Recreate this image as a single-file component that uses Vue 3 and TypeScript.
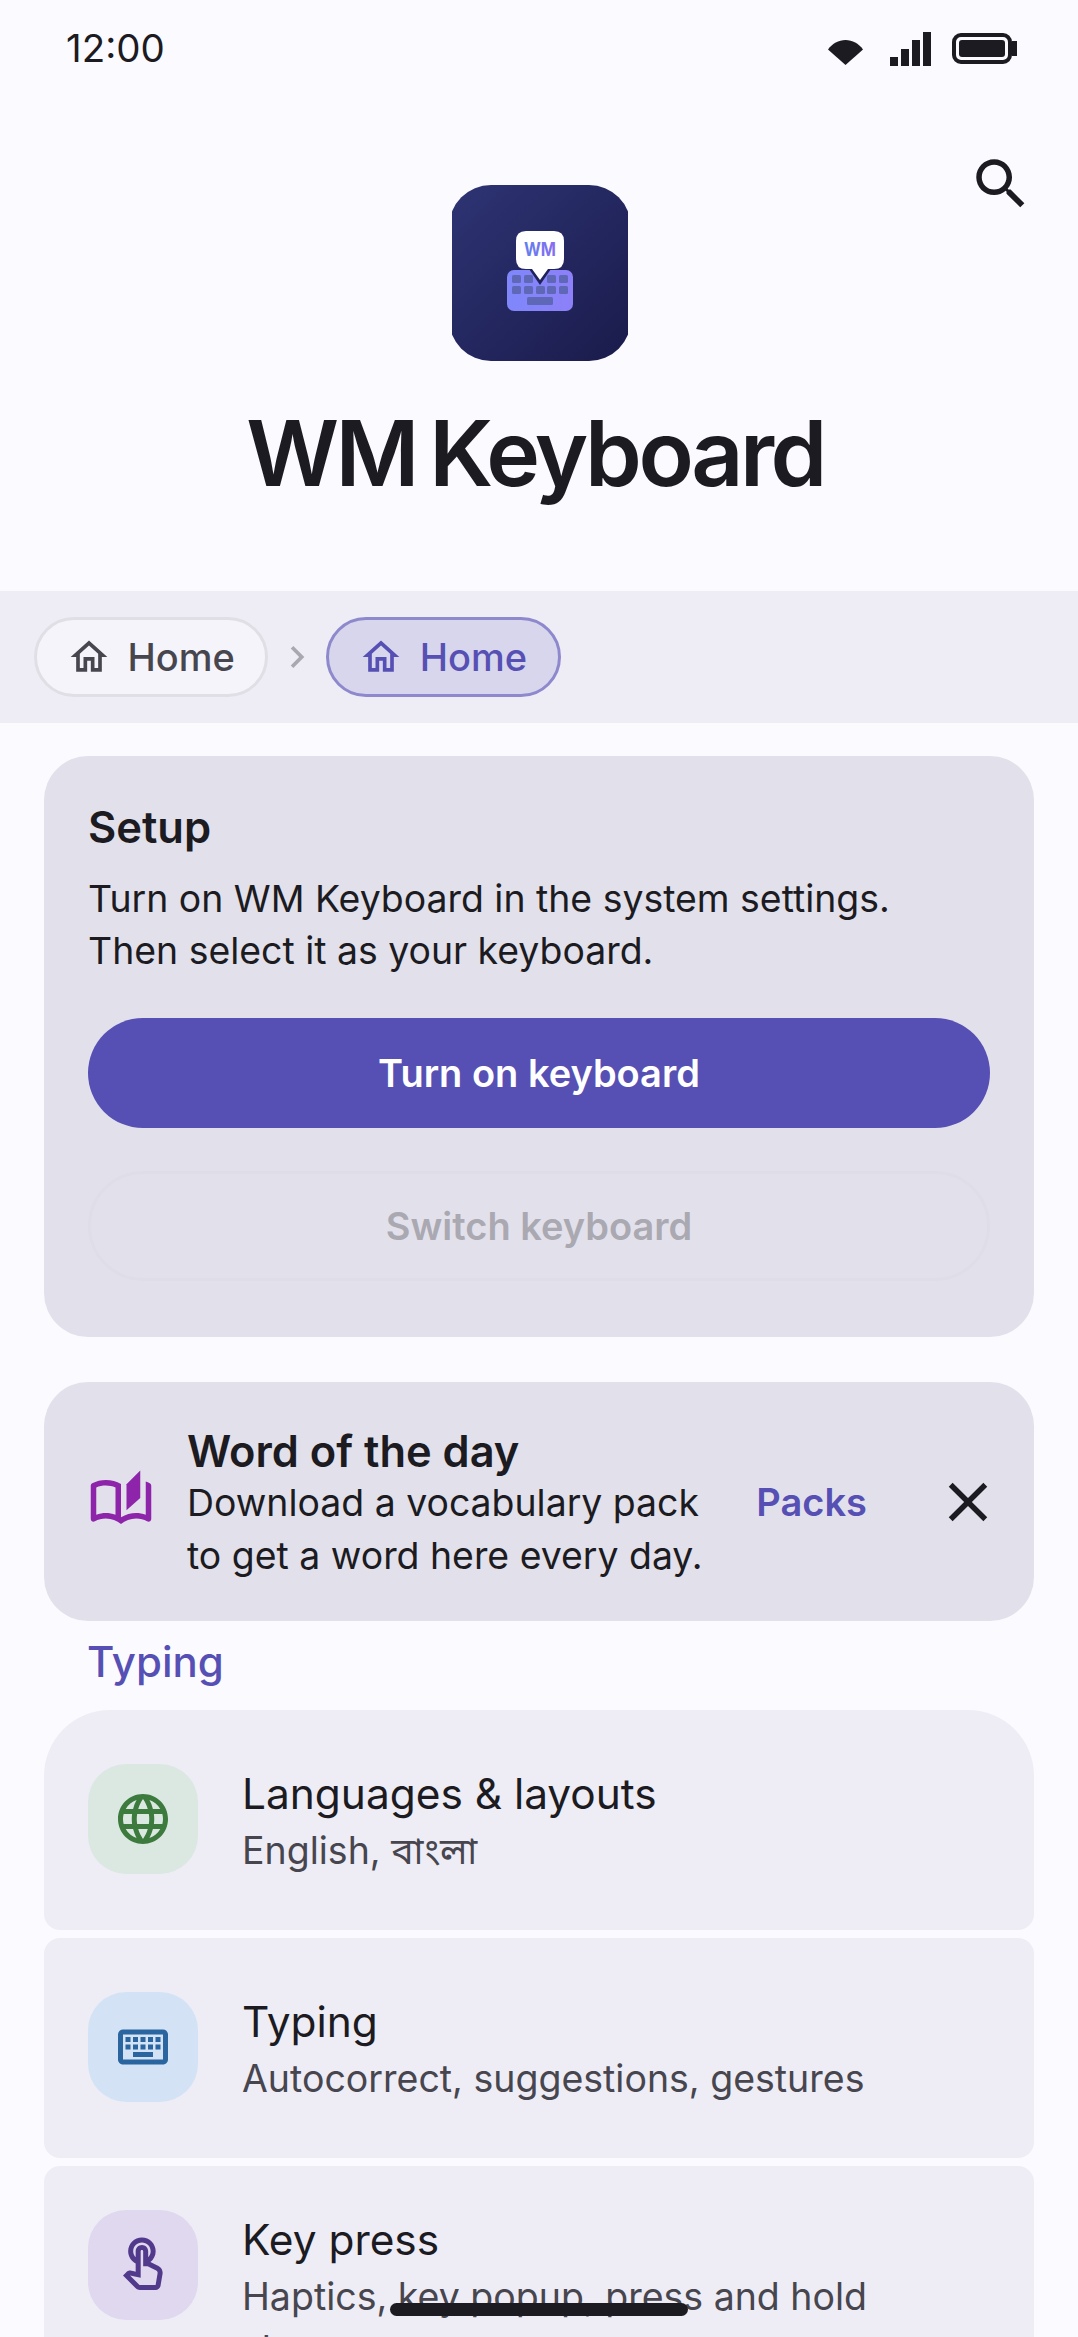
<script setup lang="ts">
interface SettingRow {
  title: string;
  sub: string;
  tone: string;
  path: string;
}

const homePath = 'M12 5.69l5 4.5V18h-2v-6H9v6H7v-7.81l5-4.5M12 3L2 12h3v8h6v-6h2v6h6v-8h3L12 3z';

const rows: SettingRow[] = [
  {
    title: 'Languages & layouts',
    sub: 'English, বাংলা',
    tone: 'green',
    path: 'M11.99 2C6.47 2 2 6.48 2 12s4.47 10 9.99 10C17.52 22 22 17.52 22 12S17.52 2 11.99 2zm6.93 6h-2.95c-.32-1.25-.78-2.45-1.38-3.56 1.84.63 3.37 1.91 4.33 3.56zM12 4.04c.83 1.2 1.48 2.53 1.91 3.96h-3.82c.43-1.43 1.08-2.76 1.91-3.96zM4.26 14C4.1 13.36 4 12.69 4 12s.1-1.36.26-2h3.38c-.08.66-.14 1.32-.14 2 0 .68.06 1.34.14 2H4.26zm.82 2h2.95c.32 1.25.78 2.45 1.38 3.56-1.84-.63-3.37-1.9-4.33-3.56zm2.95-8H5.08c.96-1.66 2.49-2.93 4.33-3.56C8.81 5.55 8.35 6.75 8.03 8zM12 19.96c-.83-1.2-1.48-2.53-1.91-3.96h3.82c-.43 1.43-1.08 2.76-1.91 3.96zM14.34 14H9.66c-.09-.66-.16-1.32-.16-2 0-.68.07-1.35.16-2h4.68c.09.65.16 1.32.16 2 0 .68-.07 1.34-.16 2zm.25 5.56c.6-1.11 1.06-2.31 1.38-3.56h2.95c-.96 1.65-2.49 2.93-4.33 3.56zM16.36 14c.08-.66.14-1.32.14-2 0-.68-.06-1.34-.14-2h3.38c.16.64.26 1.31.26 2s-.1 1.36-.26 2h-3.38z',
  },
  {
    title: 'Typing',
    sub: 'Autocorrect, suggestions, gestures',
    tone: 'blue',
    path: 'M20 7v10H4V7h16m0-2H4c-1.1 0-1.99.9-1.99 2L2 17c0 1.1.9 2 2 2h16c1.1 0 2-.9 2-2V7c0-1.1-.9-2-2-2zm-9 3h2v2h-2zm0 3h2v2h-2zM8 8h2v2H8zm0 3h2v2H8zm-3 0h2v2H5zm0-3h2v2H5zm3 6h8v2H8zm6-3h2v2h-2zm0-3h2v2h-2zm3 3h2v2h-2zm0-3h2v2h-2z',
  },
  {
    title: 'Key press',
    sub: 'Haptics, key popup, press and hold shortcuts',
    tone: 'purple',
    path: 'M18.19 12.44l-3.24-1.62c1.29-1 2.12-2.56 2.12-4.32C17.07 3.47 14.6 1 11.57 1S6.07 3.47 6.07 6.5c0 2.13 1.22 3.98 3 4.89v3.26c-2.15-.46-2.02-.44-2.26-.44-.53 0-1.03.21-1.41.59L4 16.22l5.09 5.09C9.52 21.75 10.12 22 10.74 22h6.3c.98 0 1.81-.7 1.97-1.67l.8-4.71c.22-1.3-.43-2.58-1.62-3.18zm-.35 2.85l-.8 4.71h-6.3c-.09 0-.17-.04-.24-.1l-3.68-3.68 4.25.89V6.5c0-.28.22-.5.5-.5s.5.22.5.5v6h1.76l3.46 1.73c.4.2.62.63.55 1.06zM8.07 6.5c0-1.93 1.57-3.5 3.5-3.5s3.5 1.57 3.5 3.5c0 .95-.38 1.81-1 2.44V6.5c0-1.38-1.12-2.5-2.5-2.5s-2.5 1.12-2.5 2.5v2.44c-.62-.63-1-1.49-1-2.44z',
  },
];
</script>

<template>
  <div class="screen">
    <div class="status-bar">
      <span class="clock">12:00</span>
      <div class="status-icons">
        <svg class="wifi" width="35" height="25" viewBox="0 0 35 25">
          <path d="M0 9.5C4.5 3.5 10.5 0 17.5 0S30.500 3.500 35 9.500L17.500 25z" />
        </svg>
        <svg class="signal" width="41" height="34" viewBox="0 0 41 34">
          <rect x="0" y="25" width="8" height="9" />
          <rect x="11" y="17" width="8" height="17" />
          <rect x="22" y="8" width="8" height="26" />
          <rect x="33" y="0" width="8" height="34" />
        </svg>
        <svg class="battery" width="65" height="31" viewBox="0 0 65 31">
          <rect x="2" y="2" width="56" height="27" rx="7" fill="none" stroke="#1c1b22" stroke-width="4" />
          <rect x="7" y="7" width="46" height="17" rx="3" />
          <rect x="60" y="8" width="5" height="15" />
        </svg>
      </div>
    </div>

    <header class="hero">
      <div class="hero-title">
        <svg class="logo" width="176" height="176" viewBox="0 0 176 176">
          <defs>
            <linearGradient id="logoBg" x1="0" y1="0" x2="1" y2="1">
              <stop offset="0" stop-color="#2e3474" />
              <stop offset="1" stop-color="#1a1b4b" />
            </linearGradient>
            <linearGradient id="keyBg" x1="0" y1="0" x2="1" y2="0">
              <stop offset="0" stop-color="#7f87fb" />
              <stop offset="1" stop-color="#8d80f8" />
            </linearGradient>
            <linearGradient id="wmText" x1="0" y1="0" x2="1" y2="0">
              <stop offset="0" stop-color="#5f80ee" />
              <stop offset="1" stop-color="#8a6cf0" />
            </linearGradient>
          </defs>
          <rect x="-3" width="182" height="176" rx="42" fill="url(#logoBg)" />
          <rect x="55" y="85" width="66" height="41" rx="7" fill="url(#keyBg)" />
          <g fill="#5f68b6">
            <rect x="60" y="90" width="9" height="8" rx="1.500" />
            <rect x="72" y="90" width="9" height="8" rx="1.500" />
            <rect x="95" y="90" width="9" height="8" rx="1.500" />
            <rect x="107" y="90" width="9" height="8" rx="1.500" />
            <rect x="60" y="101" width="9" height="8" rx="1.500" />
            <rect x="72" y="101" width="9" height="8" rx="1.500" />
            <rect x="84" y="101" width="9" height="8" rx="1.500" />
            <rect x="95" y="101" width="9" height="8" rx="1.500" />
            <rect x="107" y="101" width="9" height="8" rx="1.500" />
            <rect x="75" y="112" width="26" height="8" rx="1.500" />
          </g>
          <path d="M77 84L88 100L99 84z" fill="#20225a" />
          <path d="M74 46H102Q112 46 112 56V74Q112 84 102 84H96L88 95L80 84H74Q64 84 64 74V56Q64 46 74 46z" fill="#fff" />
          <text x="88" y="71" class="logo-text" text-anchor="middle" textLength="32" lengthAdjust="spacingAndGlyphs" fill="url(#wmText)">WM</text>
        </svg>
        <h1 class="app-name">WM Keyboard</h1>
      </div>
      <svg class="search" width="66" height="66" viewBox="0 0 24 24">
        <path d="M15.500 14h-.79l-.28-.27C15.410 12.590 16 11.110 16 9.500 16 5.910 13.090 3 9.500 3S3 5.910 3 9.500 5.910 16 9.500 16c1.610 0 3.090-.59 4.230-1.570l.27.28v.79l5 4.990L20.490 19l-4.990-5zm-6 0C7.010 14 5 11.990 5 9.500S7.010 5 9.500 5 14 7.010 14 9.500 11.990 14 9.500 14z" />
      </svg>
    </header>

    <nav class="crumbs">
      <div class="chip">
        <svg width="44" height="44" viewBox="0 0 24 24"><path :d="homePath" /></svg>
        <span>Home</span>
      </div>
      <svg class="chevron" width="44" height="44" viewBox="0 0 24 24">
        <path d="M10 6L8.590 7.410 13.170 12l-4.580 4.590L10 18l6-6z" />
      </svg>
      <div class="chip chip--current">
        <svg width="44" height="44" viewBox="0 0 24 24"><path :d="homePath" /></svg>
        <span>Home</span>
      </div>
    </nav>

    <section class="card setup">
      <h2 class="setup-title">Setup</h2>
      <p class="setup-text">Turn on WM Keyboard in the system settings.<br />Then select it as your keyboard.</p>
      <button type="button" class="btn btn--primary">Turn on keyboard</button>
      <button type="button" class="btn btn--disabled">Switch keyboard</button>
    </section>

    <section class="card word">
      <svg class="word-icon" width="66" height="66" viewBox="0 0 24 24">
        <path d="M22.470 5.200C22 4.960 21.510 4.760 21 4.590v12.030C19.860 16.210 18.690 16 17.500 16c-1.900 0-3.780.54-5.500 1.580V5.480C10.380 4.550 8.510 4 6.500 4 4.710 4 3.020 4.440 1.530 5.200 1.200 5.360 1 5.710 1 6.080v12.080c0 .76.82 1.230 1.530.84C3.690 18.400 5.040 18 6.500 18c2.070 0 3.980.82 5.500 2 1.520-1.180 3.430-2 5.500-2 1.460 0 2.810.4 3.970 1 .71.39 1.530-.08 1.530-.84V6.080c0-.37-.2-.72-.53-.88zM10 16.620C8.860 16.210 7.690 16 6.500 16c-1.190 0-2.360.21-3.500.62V6.710C4.110 6.240 5.280 6 6.500 6c1.200 0 2.390.25 3.500.72v9.900z" />
        <path d="M19 .5l-5 5V15l5-4.500V.5z" />
      </svg>
      <div class="word-body">
        <div class="word-title">Word of the day</div>
        <div class="word-text">Download a vocabulary pack<br />to get a word here every day.</div>
      </div>
      <span class="word-link">Packs</span>
      <svg class="word-close" width="66" height="66" viewBox="0 0 24 24">
        <path d="M19 6.410L17.590 5 12 10.590 6.410 5 5 6.410 10.590 12 5 17.590 6.410 19 12 13.410 17.590 19 19 17.590 13.410 12z" />
      </svg>
    </section>

    <div class="section-label">Typing</div>

    <div class="group">
      <div v-for="row in rows" :key="row.title" class="row">
        <div class="row-inner">
          <div class="row-icon" :class="`row-icon--${row.tone}`">
            <svg width="60" height="60" viewBox="0 0 24 24"><path :d="row.path" /></svg>
          </div>
          <div class="row-text">
            <div class="row-title">{{ row.title }}</div>
            <div class="row-sub">{{ row.sub }}</div>
          </div>
        </div>
      </div>
    </div>

    <div class="home-bar"></div>
  </div>
</template>

<style>
html,
body {
  margin: 0;
  background: #fbfaff;
  overflow: hidden;
}
</style>

<style scoped>
.screen {
  position: relative;
  width: 1078px;
  height: 2337px;
  overflow: hidden;
  background: #fbfaff;
  color: #1c1b22;
  font-family: Inter, "Noto Sans", "Noto Sans Bengali", sans-serif;
}

.status-bar {
  height: 96px;
  padding: 0 61px 0 66px;
  display: flex;
  align-items: center;
  justify-content: space-between;
}

.clock {
  font-size: 38.5px;
  line-height: 1;
}

.status-icons {
  display: flex;
  align-items: center;
  gap: 21px;
  padding-top: 1px;
}

.status-icons svg {
  fill: #1c1b22;
  display: block;
}

.wifi {
  margin: 7px 6px 0 0;
}

.hero {
  height: 495px;
  padding: 55px 44px 0;
  box-sizing: border-box;
  display: grid;
  grid-template-columns: 1fr auto 1fr;
}

.hero-title {
  grid-column: 2;
  display: flex;
  flex-direction: column;
  align-items: center;
  padding-top: 34px;
}

.logo {
  display: block;
  margin-left: 2px;
}

.logo-text {
  font-family: Inter, sans-serif;
  font-weight: 700;
  font-size: 19px;
}

.app-name {
  margin: 37px 8px 0 0;
  font-size: 91px;
  line-height: 110px;
  font-weight: 600;
  letter-spacing: -3.500px;
  word-spacing: -6px;
  white-space: nowrap;
}

.search {
  grid-column: 3;
  justify-self: end;
  fill: #1c1b22;
}

.crumbs {
  height: 132px;
  padding-left: 34px;
  background: #eeedf6;
  display: flex;
  align-items: center;
}

.chip {
  height: 80px;
  box-sizing: border-box;
  padding: 0 30.500px 0 29.500px;
  border: 3px solid #e0dfe5;
  border-radius: 40px;
  background: #f5f4fa;
  color: #47464f;
  display: flex;
  align-items: center;
  gap: 17px;
  font-size: 38px;
  font-weight: 500;
}

.chip svg {
  fill: currentColor;
}

.chip--current {
  border-color: #8e89cc;
  background: #d8d6ec;
  color: #5750b4;
}

.chevron {
  fill: #a9a8b0;
  margin: 0 7px;
}

.card {
  margin: 0 44px;
  background: #e2e1eb;
  border-radius: 44px;
}

.setup {
  margin-top: 33px;
  padding: 44px;
  height: 581px;
  box-sizing: border-box;
}

.setup-title {
  margin: 0;
  font-size: 43.500px;
  line-height: 55px;
  font-weight: 600;
}

.setup-text {
  margin: 18px 0 0;
  font-size: 37.400px;
  line-height: 52px;
}

.btn {
  display: block;
  width: 100%;
  height: 110px;
  border-radius: 55px;
  font-family: inherit;
  font-size: 38px;
  font-weight: 600;
  box-sizing: border-box;
}

.btn--primary {
  margin-top: 41px;
  border: 0;
  background: #5750b4;
  color: #fff;
}

.btn--disabled {
  margin-top: 43px;
  border: 3px solid #dedde8;
  background: transparent;
  color: #aaa9b2;
}

.word {
  margin-top: 45px;
  height: 239px;
  padding: 0 33px 0 44px;
  display: flex;
  align-items: center;
}

.word-icon {
  fill: #8e24aa;
  flex: none;
}

.word-body {
  margin-left: 33px;
  padding-top: 4px;
  flex: 1;
}

.word-title {
  font-size: 43.400px;
  line-height: 50px;
  font-weight: 600;
}

.word-text {
  font-size: 37.400px;
  line-height: 53px;
}

.word-link {
  color: #5750b4;
  font-size: 38px;
  font-weight: 600;
  margin-right: 68px;
}

.word-close {
  fill: #1c1b22;
  flex: none;
}

.section-label {
  margin: 16px 0 23px 87px;
  color: #5750b4;
  font-size: 42px;
  line-height: 50px;
  font-weight: 500;
}

.group {
  margin: 0 44px;
  display: flex;
  flex-direction: column;
  gap: 8px;
}

.row {
  min-height: 220px;
  flex: none;
  padding: 44px;
  box-sizing: border-box;
  background: #eeedf6;
  border-radius: 16px;
  display: flex;
  align-items: center;
}

.row:first-child {
  border-radius: 66px 66px 16px 16px;
}

.row-inner {
  flex: 1;
  display: flex;
  align-items: flex-start;
  gap: 44px;
}

.row-icon {
  width: 110px;
  height: 110px;
  flex: none;
  border-radius: 38px;
  display: flex;
  align-items: center;
  justify-content: center;
}

.row-icon--green {
  background: #dbe8e2;
  fill: #3c7a3e;
}

.row-icon--blue {
  background: #d3e3f5;
  fill: #2a659f;
}

.row-icon--purple {
  background: #e0d8ee;
  fill: #51398c;
}

.row-text {
  flex: 1;
  min-width: 0;
  margin-top: 2px;
}

.row-title {
  font-size: 42.400px;
  line-height: 55px;
}

.row-sub {
  margin-top: 3px;
  font-size: 37.500px;
  line-height: 53px;
  color: #47464f;
}

.home-bar {
  position: absolute;
  left: 390px;
  top: 2303px;
  width: 298px;
  height: 13px;
  border-radius: 7px;
  background: #1c1b22;
}
</style>
